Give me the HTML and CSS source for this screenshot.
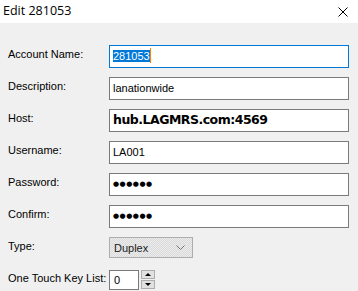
FILE: index.html
```html
<html lang="en">
<head>
    <meta charset="UTF-8">
    <meta name="viewport" content="width=device-width, initial-scale=1.0">
    <title>Edit 281053</title>
    <link rel="stylesheet" href="styles.css">
</head>
<body>
    <div id="title-bar">
        <span class="title">Edit 281053</span>
        <svg class="close" width="10" height="10" viewBox="0 0 10 10">
            <path d="M0.5 0.5 L9.5 9.5 M9.5 0.5 L0.5 9.5" stroke="#000" stroke-width="1" fill="none"/>
        </svg>
    </div>

    <div id="form">
        <div class="row">
            <label>Account Name:</label>
            <div class="field focused"><span class="selected">281053</span><span class="caret"></span></div>
        </div>
        <div class="row">
            <label>Description:</label>
            <div class="field">lanationwide</div>
        </div>
        <div class="row">
            <label>Host:</label>
            <div class="field host">hub.LAGMRS.com:4569</div>
        </div>
        <div class="row">
            <label>Username:</label>
            <div class="field">LA001</div>
        </div>
        <div class="row">
            <label>Password:</label>
            <div class="field dots">●●●●●●</div>
        </div>
        <div class="row">
            <label>Confirm:</label>
            <div class="field dots">●●●●●●</div>
        </div>
        <div class="row row-type">
            <label>Type:</label>
            <div class="combo">
                <span>Duplex</span>
                <svg width="9" height="5" viewBox="0 0 9 5">
                    <path d="M0.5 0.5 L4.5 4.5 L8.5 0.5" stroke="#707070" stroke-width="1" fill="none"/>
                </svg>
            </div>
        </div>
        <div class="row row-spin">
            <label>One Touch Key List:</label>
            <div class="spin">
                <div class="spin-field">0</div>
                <div class="spin-buttons">
                    <div class="spin-btn"><span class="arrow-up"></span></div>
                    <div class="spin-btn"><span class="arrow-down"></span></div>
                </div>
            </div>
        </div>
    </div>
</body>
</html>
```

FILE: styles.css
```css
body {
    margin: 0;
    background-color: #f0f0f0;
    font-family: "Liberation Sans", Arial, sans-serif;
    font-size: 11px;
    color: #000;
    width: 358px;
    height: 291px;
    overflow: hidden;
}

#title-bar {
    height: 23px;
    background-color: #fff;
    display: flex;
    align-items: center;
    justify-content: space-between;
    padding: 0 10px 0 3px;
}

#title-bar .title {
    font-family: "Open Sans", "Noto Sans", sans-serif;
    font-size: 12.5px;
    margin-top: -2px;
}

#title-bar .close {
    display: block;
    margin-top: 1px;
}

#form {
    padding: 22px 0 0 8px;
}

.row {
    display: grid;
    grid-template-columns: 101px 240px;
    height: 32px;
    align-items: start;
}

.row label {
    line-height: 19px;
}

.field {
    height: 23px;
    box-sizing: border-box;
    border: 1px solid #7a7a7a;
    background-color: #fff;
    padding: 0 3px;
    line-height: 20px;
    color: #000;
    white-space: nowrap;
}

.field.focused {
    border-color: #0078d7;
}

.selected {
    background-color: #0078d7;
    color: #fff;
}

.caret {
    display: inline-block;
    width: 1px;
    height: 15px;
    background-color: #ff7f00;
    vertical-align: -3px;
}

.host {
    font-family: "DejaVu Sans", Verdana, sans-serif;
    font-weight: bold;
    font-size: 12.5px;
    letter-spacing: -0.5px;
}

.dots {
    font-family: "DejaVu Sans", sans-serif;
    font-size: 7px;
    letter-spacing: 0.5px;
    line-height: 21px;
}

.row-type {
    height: 33px;
}

.combo {
    width: 84px;
    height: 21px;
    box-sizing: border-box;
    border: 1px solid #adadad;
    background-color: #e5e5e5;
    background-image: repeating-conic-gradient(#dadada 0 25%, #ececec 0 50%);
    background-size: 2px 2px;
    display: flex;
    align-items: center;
    justify-content: space-between;
    padding: 0 7px 0 4px;
    color: #1a1a1a;
}

.row-spin label {
    line-height: 17px;
}

.spin {
    display: flex;
    gap: 2px;
}

.spin-field {
    width: 30px;
    height: 20px;
    box-sizing: border-box;
    border: 1px solid #7a7a7a;
    background-color: #fff;
    padding-left: 4px;
    line-height: 19px;
}

.spin-buttons {
    display: flex;
    flex-direction: column;
    gap: 1px;
}

.spin-btn {
    width: 14px;
    height: 9px;
    box-sizing: border-box;
    border: 1px solid #adadad;
    background-color: #e1e1e1;
    display: flex;
    align-items: center;
    justify-content: center;
}

.arrow-up {
    width: 0;
    height: 0;
    border-left: 3px solid transparent;
    border-right: 3px solid transparent;
    border-bottom: 3px solid #000;
}

.arrow-down {
    width: 0;
    height: 0;
    border-left: 3px solid transparent;
    border-right: 3px solid transparent;
    border-top: 3px solid #000;
}
```
